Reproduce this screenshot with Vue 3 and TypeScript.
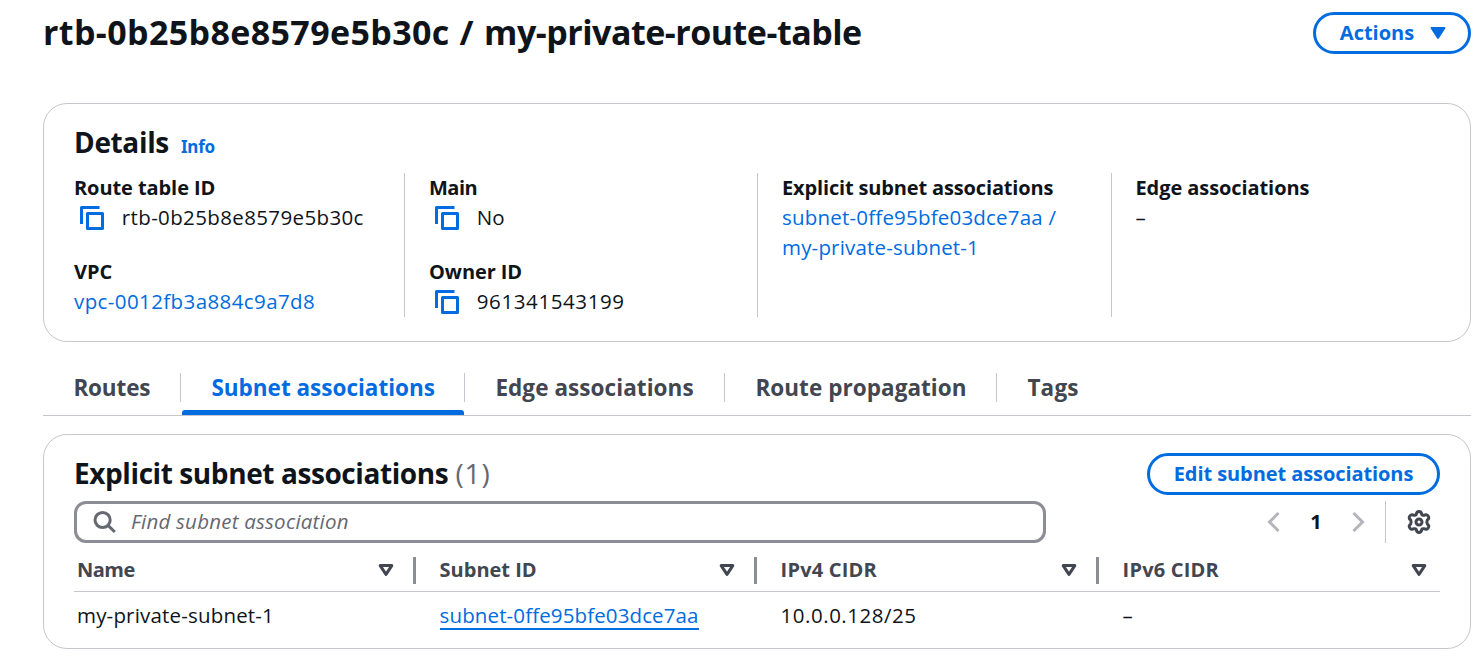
<script setup lang="ts">
interface Tab {
  label: string
  key: string
}
interface Column {
  label: string
  key: string
}

const tabs: Tab[] = [
  { label: 'Routes', key: 'routes' },
  { label: 'Subnet associations', key: 'subnets' },
  { label: 'Edge associations', key: 'edges' },
  { label: 'Route propagation', key: 'propagation' },
  { label: 'Tags', key: 'tags' },
]
const activeTab = 'subnets'

const columns: Column[] = [
  { label: 'Name', key: 'name' },
  { label: 'Subnet ID', key: 'id' },
  { label: 'IPv4 CIDR', key: 'v4' },
  { label: 'IPv6 CIDR', key: 'v6' },
]
</script>

<template>
  <main class="page">
    <header class="page-header">
      <h1><span class="t-id">rtb-0b25b8e8579e5b30c</span><span class="t-sep"> / </span><span class="t-name">my-private-route-table</span></h1>
      <button class="btn actions">
        <span>Actions</span>
        <svg width="16" height="14" viewBox="0 0 16 14"><path d="M1.5 1.9h13L8 11.9z" fill="#006ce0" stroke="#006ce0" stroke-width="1.8" stroke-linejoin="round" /></svg>
      </button>
    </header>

    <section class="card details">
      <div class="details-head">
        <h2 class="h-details">Details</h2>
        <a class="info">Info</a>
      </div>
      <div class="grid">
        <div class="col">
          <div class="field">
            <div class="label">Route table ID</div>
            <div class="value copy">
              <svg width="24" height="24" viewBox="0 0 24 24" fill="none" stroke="#006ce0" stroke-width="3" stroke-linejoin="round"><path d="M1.5 18V1.5H19.5" /><path d="M7.5 7.5h15v15h-15z" /></svg>
              <span class="v-rtb">rtb-0b25b8e8579e5b30c</span>
            </div>
          </div>
          <div class="field">
            <div class="label">VPC</div>
            <div class="value"><a class="v-vpc">vpc-0012fb3a884c9a7d8</a></div>
          </div>
        </div>
        <div class="col">
          <div class="field">
            <div class="label l-main">Main</div>
            <div class="value copy">
              <svg width="24" height="24" viewBox="0 0 24 24" fill="none" stroke="#006ce0" stroke-width="3" stroke-linejoin="round"><path d="M1.5 18V1.5H19.5" /><path d="M7.5 7.5h15v15h-15z" /></svg>
              <span>No</span>
            </div>
          </div>
          <div class="field">
            <div class="label">Owner ID</div>
            <div class="value copy">
              <svg width="24" height="24" viewBox="0 0 24 24" fill="none" stroke="#006ce0" stroke-width="3" stroke-linejoin="round"><path d="M1.5 18V1.5H19.5" /><path d="M7.5 7.5h15v15h-15z" /></svg>
              <span class="v-owner">961341543199</span>
            </div>
          </div>
        </div>
        <div class="col">
          <div class="field">
            <div class="label l-exp">Explicit subnet associations</div>
            <div class="value"><a><span class="v-sub">subnet-0ffe95bfe03dce7aa /</span><br /><span class="v-name">my-private-subnet-1</span></a></div>
          </div>
        </div>
        <div class="col">
          <div class="field">
            <div class="label">Edge associations</div>
            <div class="value">–</div>
          </div>
        </div>
      </div>
    </section>

    <nav class="tabs">
      <div v-for="tab in tabs" :key="tab.key" class="tab" :class="[tab.key, { active: tab.key === activeTab }]">
        <span>{{ tab.label }}</span>
      </div>
    </nav>

    <section class="card assoc">
      <div class="assoc-head">
        <h2><span class="h-exp">Explicit subnet associations</span> <span class="count">(1)</span></h2>
        <button class="btn edit"><span>Edit subnet associations</span></button>
      </div>
      <div class="tools">
        <div class="search">
          <svg width="24" height="24" viewBox="0 0 24 24" fill="none" stroke="#656871" stroke-width="3"><circle cx="9.6" cy="10" r="7.6" /><path d="M15 15.4 21.8 22" /></svg>
          <span class="ph">Find subnet association</span>
        </div>
        <div class="pager">
          <svg width="14" height="20" viewBox="0 0 14 20" fill="none" stroke="#b4b4bb" stroke-width="3"><path d="M11.5 1 2.5 10l9 9" /></svg>
          <span class="page-no">1</span>
          <svg width="14" height="20" viewBox="0 0 14 20" fill="none" stroke="#b4b4bb" stroke-width="3"><path d="M2.5 1l9 9-9 9" /></svg>
        </div>
        <div class="prefs">
          <svg width="26" height="26" viewBox="0 0 26 26" fill="none" stroke="#424650" stroke-width="3" stroke-linejoin="round">
            <path d="M10.2 5.6Q10.6 2.5 13 2.5T15.8 5.6Q16.4 6.5 17.8 6.3Q20.6 4.9 21.9 6.6Q24 9.2 21.3 11Q20.4 13 21.3 15Q24 16.8 21.9 19.4Q20.6 21.1 17.8 19.7Q16.4 19.5 15.8 20.4Q15.4 23.5 13 23.5T10.2 20.4Q9.6 19.5 8.2 19.7Q5.4 21.1 4.1 19.4Q2 16.8 4.7 15Q5.6 13 4.7 11Q2 9.2 4.1 6.6Q5.4 4.9 8.2 6.3Q9.6 6.5 10.2 5.6Z" />
            <circle cx="13" cy="13" r="3" />
          </svg>
        </div>
      </div>
      <div class="table">
        <div class="tr head">
          <div v-for="c in columns" :key="c.key" class="th" :class="'h-' + c.key">
            <span>{{ c.label }}</span>
            <svg width="16" height="14" viewBox="0 0 16 14"><path d="M2.2 2.6h11.6L8 11.4z" fill="none" stroke="#424650" stroke-width="3" stroke-linejoin="round" /></svg>
          </div>
        </div>
        <div class="tr row">
          <div class="td"><span class="v-name">my-private-subnet-1</span></div>
          <div class="td"><a class="link">subnet-0ffe95bfe03dce7aa</a></div>
          <div class="td"><span class="v-cidr">10.0.0.128/25</span></div>
          <div class="td">–</div>
        </div>
      </div>
    </section>
  </main>
</template>

<style>
body {
  margin: 0;
  background: #fff;
}
</style>

<style scoped>
* {
  box-sizing: border-box;
}
.page {
  width: 1483px;
  height: 666px;
  overflow: hidden;
  padding: 12px 12px 0 43px;
  font-family: 'Open Sans', 'Noto Sans', sans-serif;
  font-size: 20px;
  line-height: 30px;
  color: #0f141a;
  white-space: nowrap;
}
h1, h2 {
  margin: 0;
  font-weight: 700;
}
a {
  color: #006ce0;
}
svg {
  display: block;
  flex: none;
}
.page-header {
  display: flex;
  justify-content: space-between;
  height: 42px;
}
h1 {
  font-size: 34px;
  line-height: 40px;
}
.t-id { letter-spacing: 0.38px; }
.t-sep { letter-spacing: 0.9px; }
.t-name { letter-spacing: -0.5px; }
.btn {
  height: 42px;
  padding: 0;
  display: flex;
  align-items: center;
  justify-content: center;
  border: 3px solid #006ce0;
  border-radius: 21px;
  background: #fff;
  color: #006ce0;
  font: 700 20px/30px 'Open Sans', sans-serif;
}
.actions {
  width: 158px;
  gap: 16px;
  padding-left: 2px;
}
.card {
  border: 1px solid #c6c6cd;
  border-radius: 24px;
}
.details {
  height: 239px;
  margin-top: 49px;
  padding: 20px 30px 0;
}
.details-head {
  display: flex;
  align-items: baseline;
  gap: 12px;
  height: 37px;
  line-height: 36px;
}
h2 {
  font-size: 28px;
}
.h-details { letter-spacing: -0.35px; }
.h-exp { letter-spacing: -0.41px; }
.info {
  font: 700 17px/24px 'Noto Sans', sans-serif;
  letter-spacing: -0.2px;
}
.grid {
  display: grid;
  grid-template-columns: 330px 353px 354px 1fr;
  height: 144px;
  margin-top: 12px;
}
.col {
  display: flex;
  flex-direction: column;
  gap: 24px;
}
.col + .col {
  border-left: 1px solid #c6c6cd;
  padding-left: 24px;
}
.col:last-child {
  padding-left: 23.5px;
}
.label {
  font-weight: 700;
  letter-spacing: -0.08px;
}
.l-main { letter-spacing: -0.5px; }
.l-exp { letter-spacing: -0.15px; }
.value, .td, .ph {
  font-size: 20.5px;
}
.value {
  margin: -1px 0 1px;
}
.v-rtb { letter-spacing: 0.37px; }
.v-vpc { letter-spacing: 0.4px; }
.v-owner { letter-spacing: 0.6px; }
.v-sub { letter-spacing: 0.2px; }
.v-name { letter-spacing: 0.18px; }
.v-cidr { letter-spacing: 0.52px; }
.copy {
  display: flex;
  align-items: center;
  gap: 17.8px;
  padding-left: 6px;
}
.copy svg {
  margin-top: 2px;
}
.tabs {
  display: flex;
  height: 74px;
  border-bottom: 1px solid #c6c6cd;
  padding-top: 31px;
}
.tab {
  display: flex;
  flex-direction: column;
  justify-content: space-between;
  font-size: 22.5px;
  font-weight: 700;
  color: #424650;
}
.tab span {
  height: 29px;
  line-height: 29px;
  padding-left: 30.4px;
}
.tab:not(:last-child) span {
  border-right: 1px solid #c6c6cd;
}
.tab.routes { width: 138px; letter-spacing: -0.15px; }
.tab.subnets { width: 284px; }
.tab.edges { width: 260px; letter-spacing: 0.07px; }
.tab.propagation { width: 272px; letter-spacing: 0.05px; }
.tab.tags { letter-spacing: 0.2px; }
.tab.active {
  color: #006ce0;
}
.tab.active::after {
  content: '';
  height: 5px;
  margin: 0 1px;
  border-radius: 3px 3px 0 0;
  background: #006ce0;
}
.assoc {
  height: 215px;
  margin-top: 18px;
  padding: 18px 30px 0;
}
.assoc-head {
  display: flex;
  justify-content: space-between;
  height: 42px;
  line-height: 40px;
}
.count {
  font-weight: 400;
  color: #656871;
  letter-spacing: 0.8px;
}
.edit {
  width: 293px;
  letter-spacing: -0.08px;
}
.tools {
  display: flex;
  height: 42px;
  margin-top: 6px;
}
.search {
  width: 972px;
  display: flex;
  align-items: center;
  gap: 14px;
  padding-left: 16px;
  border: 3px solid #8c8c94;
  border-radius: 12px;
}
.ph {
  padding-bottom: 2px;
  font-style: italic;
  color: #656871;
  letter-spacing: 0.22px;
}
.pager {
  display: flex;
  align-items: center;
  justify-content: space-between;
  width: 98px;
  margin-left: 221px;
}
.page-no {
  font-weight: 700;
}
.prefs {
  display: flex;
  align-items: center;
  margin-left: auto;
  width: 55px;
  border-left: 1px solid #c6c6cd;
  padding-left: 20px;
}
.tr {
  display: grid;
  grid-template-columns: 342px 341px 342px 341px;
}
.head {
  height: 49px;
  padding-top: 14px;
  border-bottom: 1px solid #c6c6cd;
}
.th {
  height: 27px;
  line-height: 25px;
  display: flex;
  justify-content: space-between;
  align-items: flex-start;
  font-weight: 700;
  color: #424650;
  border-right: 3px solid #8c8c94;
  padding: 0 19px 0 23.6px;
}
.th svg {
  margin-top: 6px;
}
.h-name { letter-spacing: -0.5px; }
.h-v4, .h-v6 { letter-spacing: 0.2px; }
.th:last-child {
  border-right: 0;
  padding-right: 13px;
}
.td {
  padding: 8px 0 0 23.6px;
}
.th:first-child, .td:first-child {
  padding-left: 3px;
}
.link {
  display: inline-block;
  line-height: 26px;
  border-bottom: 2px solid #006ce0;
  letter-spacing: 0.12px;
}
</style>
